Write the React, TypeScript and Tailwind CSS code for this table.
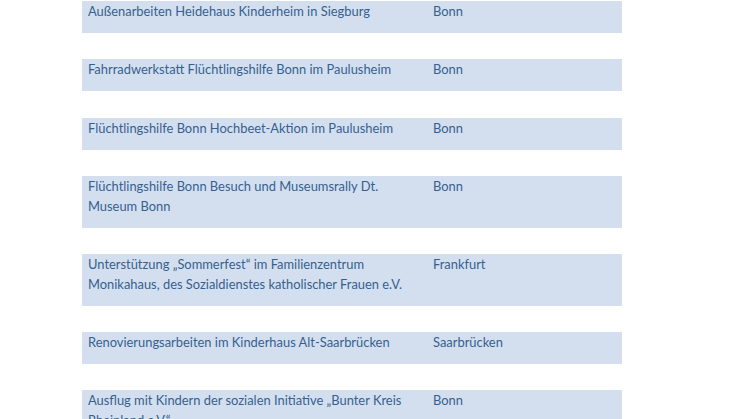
import React from "react";

const rows: { lines: string[]; city: string }[] = [
  { lines: ["Außenarbeiten Heidehaus Kinderheim in Siegburg"], city: "Bonn" },
  { lines: ["Fahrradwerkstatt Flüchtlingshilfe Bonn im Paulusheim"], city: "Bonn" },
  { lines: ["Flüchtlingshilfe Bonn Hochbeet-Aktion im Paulusheim"], city: "Bonn" },
  {
    lines: ["Flüchtlingshilfe Bonn Besuch und Museumsrally Dt.", "Museum Bonn"],
    city: "Bonn",
  },
  {
    lines: [
      "Unterstützung „Sommerfest“ im Familienzentrum",
      "Monikahaus, des Sozialdienstes katholischer Frauen e.V.",
    ],
    city: "Frankfurt",
  },
  { lines: ["Renovierungsarbeiten im Kinderhaus Alt-Saarbrücken"], city: "Saarbrücken" },
  {
    lines: ["Ausflug mit Kindern der sozialen Initiative „Bunter Kreis", "Rheinland e.V.“"],
    city: "Bonn",
  },
];

export default function App() {
  return (
    <div
      className="w-[746px] h-[419px] overflow-hidden bg-white pl-[82px] pt-[1px]"
      style={{ fontFamily: "Lato, 'Open Sans', sans-serif" }}
    >
      <div className="flex flex-col gap-[26px] w-[540px]">
        {rows.map((r, i) => (
          <div
            key={i}
            className={
              "flex bg-[#d3dfee] text-[#365f91] text-[12.9px] leading-[20px] pb-[12px]" +
              (i === 2 ? " mt-[1px]" : "")
            }
          >
            <div className="w-[345px] pl-[6px] pr-[6px]">
              {r.lines.map((l, j) => (
                <div key={j} className="whitespace-nowrap">
                  {l}
                </div>
              ))}
            </div>
            <div className="pl-[6px]">{r.city}</div>
          </div>
        ))}
      </div>
    </div>
  );
}
